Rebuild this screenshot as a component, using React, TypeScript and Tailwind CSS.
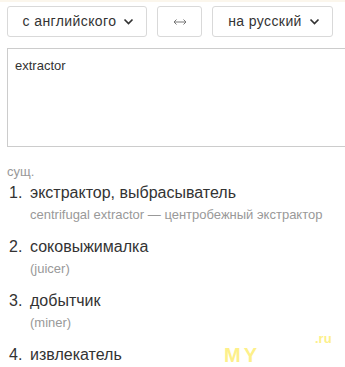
import React from "react";

const Chevron = () => (
  <svg width="11" height="8" viewBox="0 0 11 8" className="ml-[7px]">
    <polyline points="1.5,1.5 5.5,5.5 9.5,1.5" fill="none" stroke="#333" strokeWidth="1.7" />
  </svg>
);

const items = [
  { t: "экстрактор, выбрасыватель", e: "centrifugal extractor — центробежный экстрактор" },
  { t: "соковыжималка", e: "(juicer)" },
  { t: "добытчик", e: "(miner)" },
  { t: "извлекатель", e: "" },
];

export default function App() {
  return (
    <div
      className="relative w-[345px] h-[367px] overflow-hidden bg-white text-[#333]"
      style={{ fontFamily: '"Liberation Sans", Arial, sans-serif' }}
    >
      <div className="h-[2px] bg-[#fbf6ec]" />
      <div className="flex pl-[7px] pt-[4px] gap-[10px]">
        <div className="w-[140px] h-[31px] border border-[#d9d9d9] rounded-[3px] flex items-center justify-center pl-[3px] text-[14px] tracking-[0.4px]">
          с английского
          <Chevron />
        </div>
        <div className="w-[45px] h-[31px] border border-[#d9d9d9] rounded-[3px] flex items-center justify-center">
          <svg width="14" height="8" viewBox="0 0 14 8">
            <line x1="1" y1="4" x2="13" y2="4" stroke="#777" strokeWidth="1" />
            <polyline points="3.5,1.5 1,4 3.5,6.5" fill="none" stroke="#777" strokeWidth="1" />
            <polyline points="10.5,1.5 13,4 10.5,6.5" fill="none" stroke="#777" strokeWidth="1" />
          </svg>
        </div>
        <div className="w-[121px] h-[31px] border border-[#d9d9d9] rounded-[3px] flex items-center justify-center pl-[3px] text-[14px] tracking-[0.4px]">
          на русский
          <Chevron />
        </div>
      </div>
      <div className="ml-[7px] mt-[11px] w-[360px] h-[99px] border border-[#cccccc] px-[7px] pt-[7px] text-[13px] text-[#333]">
        extractor
      </div>
      <div className="pl-[7px] mt-[16px]">
        <div className="text-[13px] leading-[18px] text-[#999]">сущ.</div>
        <div className="mt-[1px]">
          {items.map((it, i) => (
            <div key={i} className="mb-[10px]">
              <div className="flex text-[16px] leading-[22px] text-[#333]">
                <span className="w-[23px] pl-[2px]">{i + 1}.</span>
                <span>{it.t}</span>
              </div>
              {it.e && (
                <div className="pl-[23px] text-[13px] leading-[22px] text-[#999]">{it.e}</div>
              )}
            </div>
          ))}
        </div>
      </div>
      <div className="absolute left-[224px] top-[340px] text-[20px] font-bold text-[#fdf08a] tracking-[3px]">MY</div>
      <div className="absolute left-[315px] top-[329px] text-[13px] font-bold text-[#fdf08a]">.ru</div>
    </div>
  );
}
